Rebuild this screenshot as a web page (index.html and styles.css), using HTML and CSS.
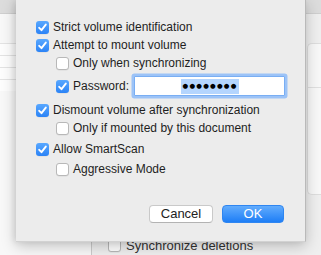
FILE: index.html
```html
<!DOCTYPE html>
<html>
<head>
<meta charset="utf-8">
<link rel="stylesheet" href="styles.css">
</head>
<body>
<div class="window">
  <div class="toolbar"></div>
  <div class="content">
    <div class="sidebar">
      <div class="list">
        <div class="list-row"></div>
        <div class="list-row"></div>
        <div class="list-row"></div>
        <div class="list-row"></div>
      </div>
    </div>
    <div class="main">
      <div class="card"><div class="card-sep"></div></div>
      <div class="sync-row">
        <span class="box"></span>
        <span class="sync-label">Synchronize deletions</span>
      </div>
    </div>
  </div>
</div>

<div class="sheet">
  <div class="options">
    <label class="row r1"><span class="box on"><svg viewBox="0 0 13 13"><path d="M3.2 6.8 L5.5 9.2 L9.8 3.6"/></svg></span><span>Strict volume identification</span></label>
    <label class="row"><span class="box on"><svg viewBox="0 0 13 13"><path d="M3.2 6.8 L5.5 9.2 L9.8 3.6"/></svg></span><span>Attempt to mount volume</span></label>
    <label class="row sub"><span class="box"></span><span>Only when synchronizing</span></label>
    <div class="row sub pw">
      <span class="box on"><svg viewBox="0 0 13 13"><path d="M3.2 6.8 L5.5 9.2 L9.8 3.6"/></svg></span><span class="pw-label">Password:</span>
      <div class="field"><span class="sel">●●●●●●●●</span></div>
    </div>
    <label class="row r5"><span class="box on"><svg viewBox="0 0 13 13"><path d="M3.2 6.8 L5.5 9.2 L9.8 3.6"/></svg></span><span>Dismount volume after synchronization</span></label>
    <label class="row sub"><span class="box"></span><span>Only if mounted by this document</span></label>
    <label class="row r7"><span class="box on"><svg viewBox="0 0 13 13"><path d="M3.2 6.8 L5.5 9.2 L9.8 3.6"/></svg></span><span>Allow SmartScan</span></label>
    <label class="row sub r8"><span class="box"></span><span>Aggressive Mode</span></label>
  </div>
  <div class="buttons">
    <button class="btn cancel">Cancel</button>
    <button class="btn ok">OK</button>
  </div>
</div>
</body>
</html>
```

FILE: styles.css
```css
html, body {
  margin: 0;
  padding: 0;
}
body {
  width: 321px;
  height: 255px;
  overflow: hidden;
  position: relative;
  background: #ececec;
  font-family: "Liberation Sans", Arial, sans-serif;
  font-size: 12px;
  color: #1e1e1e;
}
.window {
  display: flex;
  flex-direction: column;
  height: 255px;
}
.toolbar {
  height: 13px;
  background: #dcdcdc;
  border-bottom: 1px solid #cfcfcf;
}
.content {
  flex: 1;
  display: flex;
}
.sidebar {
  width: 91px;
  background: #f8f8f8;
  border-right: 1px solid #cbcbcb;
}
.list {
  margin-top: 29px;
  background: #fdfdfd;
}
.list-row {
  height: 11px;
  border-top: 1px solid #e3e3e3;
}
.main {
  flex: 1;
  display: flex;
  flex-direction: column;
  background: #efefef;
  overflow: hidden;
}
.card {
  flex: none;
  align-self: flex-end;
  width: 13px;
  height: 150px;
  margin-top: 29px;
  background: #f8f8f8;
  border: 1px solid #dedede;
  border-right: none;
  border-radius: 5px 0 0 5px;
}
.card-sep {
  margin-top: 43px;
  border-top: 1px solid #e0e0e0;
}
.sync-row {
  flex: none;
  display: flex;
  align-items: center;
  gap: 5px;
  margin-top: 43px;
  padding-left: 16px;
  font-size: 13px;
  color: #333;
}
.sheet {
  position: absolute;
  left: 16px;
  top: 0;
  width: 290px;
  height: 242px;
  box-sizing: border-box;
  background: #ececec;
  border-right: 1px solid #b9b9b9;
  border-bottom: 1px solid #d2d2d2;
  box-shadow: 0 4px 14px rgba(0, 0, 0, 0.22), -2px 0 6px rgba(0, 0, 0, 0.08);
  display: flex;
  flex-direction: column;
  padding: 18px 20px 0 20px;
}
.options {
  display: flex;
  flex-direction: column;
}
.row {
  display: flex;
  align-items: center;
  height: 18px;
  gap: 4px;
  white-space: nowrap;
}
.row.sub {
  padding-left: 20px;
}
.row.pw {
  height: 24px;
  margin-top: 2px;
}
.row.r5 { margin-top: 3px; }
.row.r7 { margin-top: 3px; }
.row.r8 { margin-top: 2px; }
.box {
  width: 13px;
  height: 13px;
  box-sizing: border-box;
  flex: none;
  border-radius: 3px;
  background: #fff;
  border: 1px solid #b8b8b8;
  box-shadow: 0 0.5px 0.5px rgba(0,0,0,0.08);
  display: flex;
}
.box.on {
  border: none;
  background: linear-gradient(#59a8ff, #2b83f6);
}
.box svg {
  width: 13px;
  height: 13px;
}
.box svg path {
  fill: none;
  stroke: #fff;
  stroke-width: 1.9;
  stroke-linecap: round;
  stroke-linejoin: round;
}
.pw-label {
  width: 58px;
}
.field {
  width: 151px;
  height: 18px;
  background: #fff;
  border: 1px solid #79aef3;
  box-shadow: 0 0 0 2.5px #9cc3f7;
  border-radius: 1px;
  display: flex;
  align-items: center;
  justify-content: center;
}
.sel {
  background: #b4d5fe;
  font-family: "DejaVu Sans", sans-serif;
  font-size: 6.5px;
  letter-spacing: 1.2px;
  line-height: 15px;
  padding: 0 1px 0 2px;
  color: #000;
}
.buttons {
  display: flex;
  justify-content: flex-end;
  gap: 9px;
  margin-top: 27px;
  padding-right: 1px;
}
.btn {
  height: 18px;
  padding: 0;
  font-family: "Liberation Sans", Arial, sans-serif;
  font-size: 13px;
  border-radius: 4px;
  line-height: 16px;
}
.cancel {
  width: 64px;
  background: #fff;
  color: #222;
  border: 1px solid #c9c9c9;
  border-bottom-color: #b3b3b3;
}
.ok {
  width: 62px;
  background: linear-gradient(#62acfd, #1e7ef6);
  color: #fff;
  border: 1px solid #2f86f1;
}
```
